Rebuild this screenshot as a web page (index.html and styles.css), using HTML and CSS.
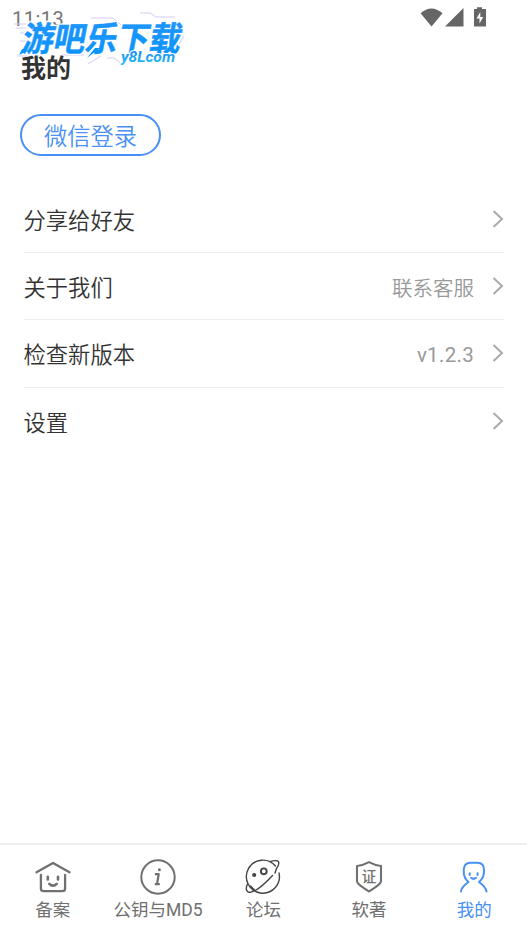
FILE: index.html
```html
<!DOCTYPE html>
<html lang="zh-CN">
<head>
<meta charset="utf-8">
<title>我的</title>
<link rel="stylesheet" href="styles.css">
</head>
<body>
<div class="app">
  <header class="status">
    <span class="time">11:13</span>
    <svg class="indicators" width="68" height="22" viewBox="0 0 68 22" fill="#666">
      <path d="M0.5 6.200Q11.500-3.400 22.500 6.200L11.500 19.500Z"/>
      <path d="M43.500 1V19.500H25Z"/>
      <path d="M54 2h3V0.300h5V2h4v17.500h-12Z"/>
      <path d="M60.300 5L56.500 11.500h3v5l3.700-6.500h-2.900Z" fill="#fff"/>
    </svg>
  </header>
  <svg class="watermark" width="210" height="72" viewBox="0 0 210 72">
    <defs>
      <linearGradient id="blue" x1="0" y1="0" x2="0" y2="1"><stop offset="0" stop-color="#2596ff"/><stop offset="1" stop-color="#0794fb"/></linearGradient>
      <linearGradient id="cyan" x1="0" y1="0" x2="0" y2="1"><stop offset="0" stop-color="#1583f4"/><stop offset="1" stop-color="#25bff5"/></linearGradient>
    </defs>
    <path d="M6 16H18M8 20H18M12 25H18M12 33H18M83 10H105L113 17M132 5H142L148 9H167M54 47H76M80 56L93 48M99 50H106L114 56M171 36L176 28M9 48H19" fill="none" stroke="#cfcdf5" stroke-width="1"/>
    <g class="brand" transform="translate(12.500 42.500) skewX(-11)">
      <text class="brand-outline" textLength="159" lengthAdjust="spacingAndGlyphs">游吧乐下载</text>
      <text class="brand-fill" textLength="159" lengthAdjust="spacingAndGlyphs">游吧乐下载</text>
    </g>
    <path d="M14 41L11 47L19 43ZM79 50L92 40L87 40Z" fill="#0794fb"/>
    <text class="domain" x="113" y="53.500" textLength="54" lengthAdjust="spacingAndGlyphs">y8Lcom</text>
  </svg>
  <main class="content">
    <h1>我的</h1>
    <button class="login">微信登录</button>
    <section class="menu">
      <div class="row"><span>分享给好友</span><svg class="chevron" viewBox="0 0 12 20"><path d="M1.500 2L10 10L1.500 18"/></svg></div>
      <div class="row"><span>关于我们</span><span class="note">联系客服</span><svg class="chevron" viewBox="0 0 12 20"><path d="M1.500 2L10 10L1.500 18"/></svg></div>
      <div class="row"><span>检查新版本</span><span class="note version">v1.2.3</span><svg class="chevron" viewBox="0 0 12 20"><path d="M1.500 2L10 10L1.500 18"/></svg></div>
      <div class="row"><span>设置</span><svg class="chevron" viewBox="0 0 12 20"><path d="M1.500 2L10 10L1.500 18"/></svg></div>
    </section>
  </main>
  <nav class="tabs">
    <a class="tab"><svg class="icon" viewBox="0 0 36 36"><path d="M1.500 13.200L18 4L34.500 13.200M5.900 16V29.500Q5.900 32.200 9 32.200H27Q30.100 32.200 30.100 29.500V16" stroke-width="2.300"/><path d="M12.800 17.800V20.500M23 17.800V20.500M14.300 24.800Q18 28.500 21.700 24.800" stroke-width="2.600"/></svg><span>备案</span></a>
    <a class="tab"><svg class="icon" viewBox="0 0 36 36"><circle cx="18" cy="18" r="16.700" stroke-width="2"/><path d="M14.800 15.200H18.700L17 25.200H19.800M14.800 25.200H17" stroke-width="2.200" stroke-linecap="butt"/><circle cx="19.400" cy="10.700" r="1.500" fill="currentColor" stroke="none"/></svg><span>公钥与MD5</span></a>
    <a class="tab dark"><svg class="icon" viewBox="0 0 36 36"><path d="M30.500 7A16.500 16.500 0 1 0 34 14M9.500 32C15 29 22 22.500 27.500 16.500M25 2.700C29 1.300 33 1.300 33.500 2.500C34 4 33.500 7 31.500 9.500M2.500 25C1 28 1 31 2.500 32.500C4 34 8 33 9.500 31L5.500 27M31.500 9.500L30 14" stroke-width="1.400"/><circle cx="9.200" cy="16" r="2.100" fill="currentColor" stroke="none"/><circle cx="18.800" cy="12.300" r="2.900" stroke-width="1.900"/></svg><span>论坛</span></a>
    <a class="tab"><svg class="icon" viewBox="0 0 36 36"><path d="M18 3.200Q24 6.500 30 7V22C30 26 23 28.500 18 32.500C13 28.500 6 26 6 22V7Q12 6.500 18 3.200Z" stroke-width="2.100"/><text class="seal" x="18" y="23">证</text></svg><span>软著</span></a>
    <a class="tab active"><svg class="icon" viewBox="0 0 36 36"><path d="M5 32.500C5.300 28 9 25.500 12.500 23C8.500 20 7.500 16 7.700 11Q8 3.800 14.500 3.800H21.500Q28 3.800 28 11C28.200 16 27 20 23 23C26.500 25.500 30 28 30.500 32.500" stroke-width="2"/><path d="M13.700 14.300V16M21.600 14.300V16M15 18.800Q17.500 21 20 18.800" stroke-width="2"/></svg><span>我的</span></a>
  </nav>
</div>
</body>
</html>
```
FILE: styles.css
```css
* { box-sizing: border-box; }
body {
  margin: 0;
  background: #fff;
  color: #333;
  font-family: Roboto, "Noto Sans CJK SC", sans-serif;
}
.app {
  position: relative;
  display: flex;
  flex-direction: column;
  height: 937px;
  overflow: hidden;
}
.status {
  display: flex;
  justify-content: space-between;
  height: 49px;
  padding: 7px 39px 0 12px;
}
.time { font-size: 20px; line-height: 24px; letter-spacing: .5px; color: #757575; }
.watermark { position: absolute; left: 8px; top: 8px; overflow: visible; }
.brand { font: 700 34px "Noto Sans CJK SC", sans-serif; }
.brand-outline { fill: #fff; stroke: #fff; stroke-width: 3px; }
.brand-fill { fill: url(#blue); stroke: #1295fc; stroke-width: .5px; }
.domain {
  font: italic 700 14px Roboto, sans-serif;
  fill: url(#cyan);
  paint-order: stroke;
  stroke: #fff;
  stroke-width: 2px;
}
.content { flex: 1; padding: 0 23px 0 24px; }
h1 {
  margin: 0 0 25px -3px;
  font-size: 25px;
  line-height: 40px;
  font-weight: 700;
}
.login {
  display: block;
  width: 141px;
  height: 42px;
  margin: 0 0 29.500px -4px;
  padding: 0;
  border: 2px solid #4890f5;
  border-radius: 21px;
  background: #fff;
  color: #4890f5;
  font: 350 23.300px/38px "Noto Sans CJK SC", sans-serif;
}
.row {
  display: flex;
  align-items: center;
  height: 67.400px;
  border-bottom: 1px solid #eee;
  font-size: 22.300px;
  font-weight: 350;
}
.row:last-child { border: 0; }
.row > span:first-child { margin-left: -.5px; }
.note { margin-left: auto; padding-top: 2px; color: #999; font-size: 20.500px; }
.version { padding-top: 3px; letter-spacing: .3px; font-weight: 400; }
.chevron {
  width: 12px;
  height: 20px;
  margin-left: auto;
  fill: none;
  stroke: #aaa;
  stroke-width: 2;
}
.note + .chevron { margin-left: 18px; }
.tabs {
  display: grid;
  grid-template-columns: repeat(5, 1fr);
  height: 94px;
  border-top: 2px solid #eee;
}
.tab {
  display: flex;
  flex-direction: column;
  align-items: center;
  padding-top: 14px;
  color: #707070;
  font-size: 17.500px;
  line-height: 30px;
  white-space: nowrap;
}
.icon {
  width: 36px;
  height: 36px;
  fill: none;
  stroke: currentColor;
  stroke-linecap: round;
  stroke-linejoin: round;
}
.dark .icon { color: #444; }
.active { color: #4890f5; }
.seal {
  font: 500 14.500px "Noto Sans CJK SC", sans-serif;
  text-anchor: middle;
  fill: currentColor;
  stroke: none;
}
```
